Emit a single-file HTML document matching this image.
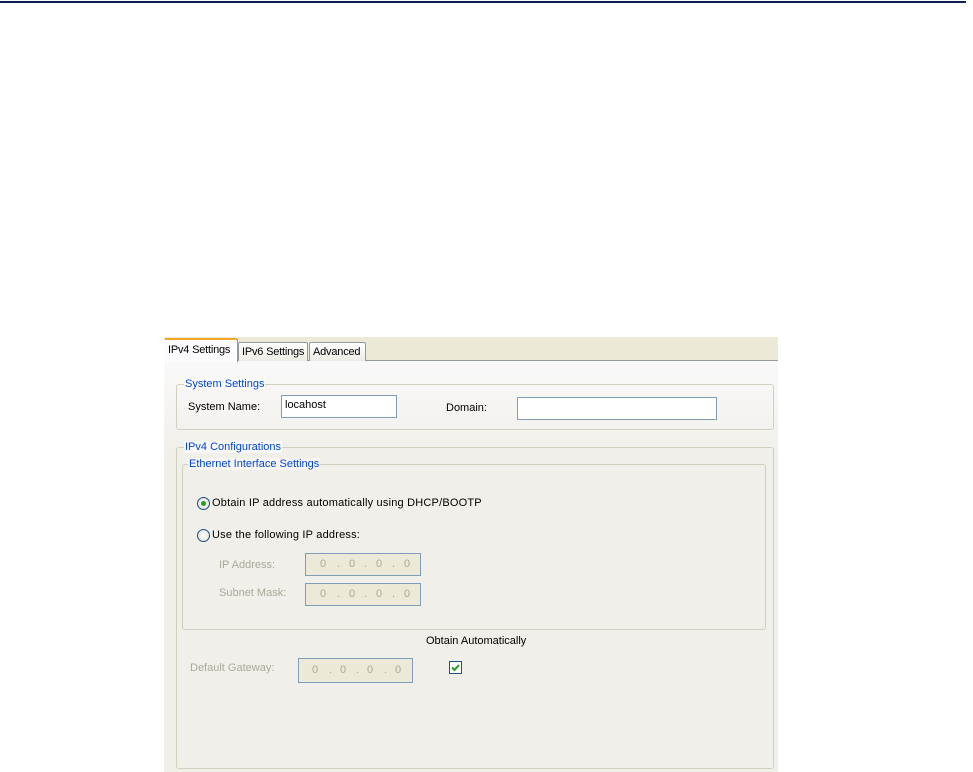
<!DOCTYPE html>
<html><head><style>
*{margin:0;padding:0;box-sizing:border-box}
body{width:973px;height:772px;background:#fff;position:relative;overflow:hidden;font-family:"Liberation Sans",sans-serif;font-size:11px;color:#000}
.a{position:absolute;white-space:nowrap}
.topline{left:0;top:1px;width:966px;height:2px;background:#0a2152}
.panel{left:164px;top:337px;width:614px;height:435px;background:linear-gradient(#fcfcfe,#f1efe9 120px)}
.strip{left:164px;top:337px;width:614px;height:24px;background:#ece9d8;border-bottom:1px solid #919b9c}
.tab{top:342px;height:19px;border:1px solid #919b9c;border-bottom:none;background:linear-gradient(#fff,#ecebe5);padding:3px 0 0 3px;border-radius:2px 2px 0 0;letter-spacing:-0.2px}
.tab.sel{top:338px;height:24px;background:#fcfcfe;border-top:2px solid #f5a623;border-color:#f5a623 #919b9c transparent #fcfcfe;padding-top:4px;left:164px;width:74px}
.fs{border:1px solid #d0d0bf;border-radius:3px}
.lg{color:#0046d5;background:inherit;padding:0 1px}
.inp{background:#fff;border:1px solid #7f9db9}
.ip{background:#ece9d8;border:1px solid #7f9db9;color:#aca899;font-size:11px}
.ip span{position:absolute;top:4px}
.gray{color:#aca899}
.radio{width:13px;height:13px;border-radius:50%;border:1px solid #1c5180;background:radial-gradient(#fff,#dcdad0)}
</style></head><body>
<div class="a topline"></div>
<div class="a panel"></div>
<div class="a strip"></div>
<div class="a tab" style="left:238px;width:70px">IPv6 Settings</div>
<div class="a tab" style="left:309px;width:57px">Advanced</div>
<div class="a tab sel">IPv4 Settings</div>

<div class="a fs" style="left:176px;top:384px;width:598px;height:46px"></div>
<div class="a lg" style="left:184px;top:378px;background:#fbfbfc">System Settings</div>
<div class="a" style="left:188px;top:401px">System Name:</div>
<div class="a inp" style="left:281px;top:395px;width:116px;height:23px"></div>
<div class="a" style="left:285px;top:399px">locahost</div>
<div class="a" style="left:446px;top:402px">Domain:</div>
<div class="a inp" style="left:517px;top:397px;width:200px;height:23px"></div>

<div class="a fs" style="left:176px;top:447px;width:598px;height:322px"></div>
<div class="a lg" style="left:184px;top:441px;background:#f8f8f6">IPv4 Configurations</div>
<div class="a fs" style="left:182px;top:464px;width:584px;height:166px"></div>
<div class="a lg" style="left:188px;top:458px;background:#f7f6f3">Ethernet Interface Settings</div>

<div class="a radio" style="left:197px;top:497px"></div>
<div class="a" style="left:201px;top:501px;width:5px;height:5px;border-radius:50%;background:#21a121"></div>
<div class="a" style="left:212px;top:497px;letter-spacing:0.2px">Obtain IP address automatically using DHCP/BOOTP</div>
<div class="a radio" style="left:197px;top:529px"></div>
<div class="a" style="left:212px;top:529px;letter-spacing:0.2px">Use the following IP address:</div>

<div class="a gray" style="left:219px;top:559px">IP Address:</div>
<div class="a ip" style="left:305px;top:553px;width:116px;height:23px"><span style="left:14px">0</span><span style="left:31px">.</span><span style="left:43px">0</span><span style="left:58px">.</span><span style="left:70px">0</span><span style="left:86px">.</span><span style="left:98px">0</span></div>
<div class="a gray" style="left:219px;top:587px">Subnet Mask:</div>
<div class="a ip" style="left:305px;top:583px;width:116px;height:23px"><span style="left:14px">0</span><span style="left:31px">.</span><span style="left:43px">0</span><span style="left:58px">.</span><span style="left:70px">0</span><span style="left:86px">.</span><span style="left:98px">0</span></div>

<div class="a" style="left:426px;top:635px">Obtain Automatically</div>
<div class="a gray" style="left:190px;top:662px">Default Gateway:</div>
<div class="a ip" style="left:298px;top:658px;width:115px;height:25px"><span style="left:13px;top:5px">0</span><span style="left:30px;top:5px">.</span><span style="left:41px;top:5px">0</span><span style="left:57px;top:5px">.</span><span style="left:68px;top:5px">0</span><span style="left:85px;top:5px">.</span><span style="left:96px;top:5px">0</span></div>
<div class="a" style="left:449px;top:661px;width:13px;height:13px;border:1px solid #1c5180;background:#fff"></div>
<svg class="a" style="left:449px;top:661px" width="13" height="13"><path d="M3 6.5 L5.5 9 L10 4" stroke="#21a121" stroke-width="2" fill="none"/></svg>
</body></html>
